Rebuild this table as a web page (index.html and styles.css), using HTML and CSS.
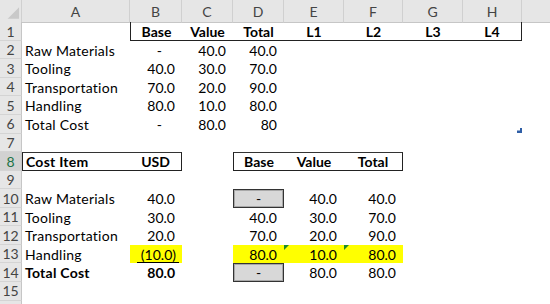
FILE: index.html
```html
<!DOCTYPE html>
<html>
<head>
<meta charset="utf-8">
<link rel="stylesheet" href="styles.css">
</head>
<body>
<div class="sheet">
  <div class="row hdr">
    <div class="corner"><svg width="22" height="22" viewBox="0 0 22 22"><polygon points="20,7 20,19 8,19" fill="#c9c9c9"/></svg></div>
    <div class="ch">A</div><div class="ch">B</div><div class="ch">C</div><div class="ch">D</div><div class="ch">E</div><div class="ch">F</div><div class="ch">G</div><div class="ch">H</div><div class="ch last"></div>
  </div>
  <div class="row">
    <div class="rh">1</div><div class="c"></div>
    <div class="c th bb bl">Base</div><div class="c th bb">Value</div><div class="c th bb">Total</div><div class="c th bb">L1</div><div class="c th bb">L2</div><div class="c th bb">L3</div><div class="c th bb br">L4</div>
  </div>
  <div class="row">
    <div class="rh">2</div><div class="c lbl">Raw Materials</div>
    <div class="c num dash">-</div><div class="c num">40.0</div><div class="c num">40.0</div>
  </div>
  <div class="row">
    <div class="rh">3</div><div class="c lbl">Tooling</div>
    <div class="c num">40.0</div><div class="c num">30.0</div><div class="c num">70.0</div>
  </div>
  <div class="row">
    <div class="rh">4</div><div class="c lbl">Transportation</div>
    <div class="c num">70.0</div><div class="c num">20.0</div><div class="c num">90.0</div>
  </div>
  <div class="row">
    <div class="rh">5</div><div class="c lbl">Handling</div>
    <div class="c num">80.0</div><div class="c num">10.0</div><div class="c num">80.0</div>
  </div>
  <div class="row">
    <div class="rh">6</div><div class="c lbl">Total Cost</div>
    <div class="c num dash">-</div><div class="c num">80.0</div><div class="c num">80</div>
    <div class="c"></div><div class="c"></div><div class="c"></div>
    <div class="c mark-cell"><svg class="qa" width="5" height="5" viewBox="0 0 5 5"><path d="M3 0h2v5H0V2.5h3z" fill="#2f5ea6"/></svg></div>
  </div>
  <div class="row">
    <div class="rh">7</div>
  </div>
  <div class="row">
    <div class="rh sel">8</div>
    <div class="c lbl bold box-t bb bl">Cost Item</div><div class="c th box-t bb br">USD</div>
    <div class="c"></div>
    <div class="c th box-t bb bl">Base</div><div class="c th box-t bb">Value</div><div class="c th box-t bb br">Total</div>
  </div>
  <div class="row">
    <div class="rh">9</div>
  </div>
  <div class="row">
    <div class="rh">10</div><div class="c lbl">Raw Materials</div>
    <div class="c num">40.0</div><div class="c"></div>
    <div class="c gbox">-</div><div class="c num">40.0</div><div class="c num">40.0</div>
  </div>
  <div class="row">
    <div class="rh">11</div><div class="c lbl">Tooling</div>
    <div class="c num">30.0</div><div class="c"></div>
    <div class="c num">40.0</div><div class="c num">30.0</div><div class="c num">70.0</div>
  </div>
  <div class="row">
    <div class="rh">12</div><div class="c lbl">Transportation</div>
    <div class="c num">20.0</div><div class="c"></div>
    <div class="c num">70.0</div><div class="c num">20.0</div><div class="c num">90.0</div>
  </div>
  <div class="row">
    <div class="rh">13</div><div class="c lbl">Handling</div>
    <div class="c yel ul-cell"><span class="ul">(10.0)</span></div><div class="c"></div>
    <div class="c num yel">80.0</div>
    <div class="c num yel err"><svg class="tri" width="5" height="5" viewBox="0 0 5 5"><polygon points="0,0 5,0 0,5" fill="#1d8a2a"/></svg>10.0</div>
    <div class="c num yel err"><svg class="tri" width="5" height="5" viewBox="0 0 5 5"><polygon points="0,0 5,0 0,5" fill="#1d8a2a"/></svg>80.0</div>
  </div>
  <div class="row">
    <div class="rh">14</div><div class="c lbl bold">Total Cost</div>
    <div class="c num bold">80.0</div><div class="c"></div>
    <div class="c gbox">-</div><div class="c num">80.0</div><div class="c num">80.0</div>
  </div>
  <div class="row">
    <div class="rh">15</div>
  </div>
  <div class="row">
    <div class="rh"></div>
  </div>
</div>
</body>
</html>
```

FILE: styles.css
```css
* { box-sizing: border-box; }
html, body { margin: 0; padding: 0; background: #fff; }
body {
  font-family: Lato, "Liberation Sans", sans-serif;
  font-size: 14px;
  color: #000;
  overflow: hidden;
}
.sheet {
  display: flex;
  flex-direction: column;
  width: 550px;
  height: 304px;
  overflow: hidden;
}
.row {
  display: grid;
  grid-template-columns: 22px 108px 52px 51px 51px 60px 59px 60px 59px 1fr;
  height: 18.55px;
  flex: none;
}
.row.hdr { height: 22.3px; }
.corner {
  background: #e6e6e6;
  border-right: 1px solid #d0d0d0;
  border-bottom: 1px solid #c6c6c6;
  display: flex;
}
.ch {
  background: #e6e6e6;
  color: #444;
  border-right: 1px solid #d0d0d0;
  border-bottom: 1px solid #c6c6c6;
  display: flex;
  align-items: center;
  justify-content: center;
  font-size: 14px;
}
.ch.last { border-right: none; }
.rh {
  background: #e6e6e6;
  color: #444;
  border-right: 1px solid #c6c6c6;
  border-bottom: 1px solid #d4d4d4;
  display: flex;
  align-items: center;
  justify-content: center;
  font-size: 14px;
}
.rh.sel { background: #d2d2d2; color: #217346; }
.c {
  display: flex;
  align-items: center;
  white-space: nowrap;
  position: relative;
}
.lbl { padding-left: 3px; justify-content: flex-start; letter-spacing: 0.25px; }
.th { font-weight: 700; justify-content: center; }
.bold { font-weight: 700; }
.num { justify-content: flex-end; padding-right: 7px; }
.num.dash { padding-right: 20px; }
.bb { border-bottom: 1px solid #222; }
.bl { border-left: 1px solid #222; }
.br { border-right: 1px solid #222; }
.box-t { border-top: 1px solid #333; }
.yel { background: #ffff00; }
.gbox {
  justify-content: center;
  background-color: #d8d8d8;
  border: 1px solid #333;
  box-shadow: inset 0 0 0 1px #a8a8a8;
}
.ul-cell { padding: 0 3px 0 7px; }
.ul {
  display: block;
  width: 100%;
  text-align: right;
  padding-right: 3px;
  line-height: 15px;
  border-bottom: 1px solid #000;
  margin-top: 1px;
}
.err .tri { position: absolute; left: 0; top: 0; }
.mark-cell .qa { position: absolute; right: 0; bottom: 1px; }
```
